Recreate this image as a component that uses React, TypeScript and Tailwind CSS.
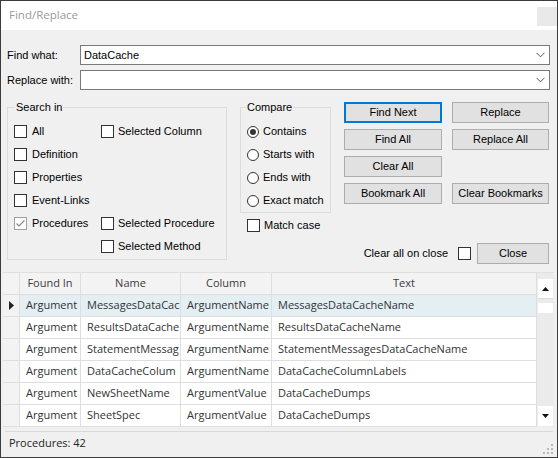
import React from "react";

function Check({ checked = false }: { checked?: boolean }) {
  return (
    <span
      className={
        checked
          ? "w-[13px] h-[13px] border border-[#a0a0a0] bg-white flex items-center justify-center shrink-0"
          : "w-[13px] h-[13px] border border-[#333333] bg-white flex items-center justify-center shrink-0"
      }
    >
      {checked && (
        <svg width="11" height="11" viewBox="0 0 11 11">
          <polyline points="1.5,5.5 4,8 9.5,2.5" fill="none" stroke="#8a8a8a" strokeWidth="1.2" />
        </svg>
      )}
    </span>
  );
}

function Radio({ checked = false }: { checked?: boolean }) {
  return (
    <span className="w-[12px] h-[12px] rounded-full border border-[#333333] bg-white flex items-center justify-center shrink-0">
      {checked && <span className="w-[6px] h-[6px] rounded-full bg-[#333333]" />}
    </span>
  );
}

function Combo({ value }: { value: string }) {
  return (
    <div className="w-[470px] h-[20px] border border-[#7a7a7a] bg-white flex items-center justify-between pl-[3px] pr-[4px]">
      <span className="leading-[14px]">{value}</span>
      <svg width="9" height="6" viewBox="0 0 9 6">
        <polyline points="0.5,0.8 4.5,4.8 8.5,0.8" fill="none" stroke="#555" strokeWidth="1" />
      </svg>
    </div>
  );
}

function Btn({ label, focused = false }: { label: string; focused?: boolean }) {
  return (
    <div
      className={
        focused
          ? "h-[21px] border-2 border-[#0078d7] bg-[#e1e1e1] flex items-center justify-center"
          : "h-[21px] border border-[#adadad] bg-[#e1e1e1] flex items-center justify-center"
      }
    >
      {label}
    </div>
  );
}

const rows: [string, string, string, string][] = [
  ["Argument", "MessagesDataCac", "ArgumentName", "MessagesDataCacheName"],
  ["Argument", "ResultsDataCache", "ArgumentName", "ResultsDataCacheName"],
  ["Argument", "StatementMessag", "ArgumentName", "StatementMessagesDataCacheName"],
  ["Argument", "DataCacheColum", "ArgumentName", "DataCacheColumnLabels"],
  ["Argument", "NewSheetName", "ArgumentValue", "DataCacheDumps"],
  ["Argument", "SheetSpec", "ArgumentValue", "DataCacheDumps"],
];

export default function App() {
  return (
    <div className="w-[558px] h-[458px] border border-[#3c3c3c] bg-[#f0f0f0] flex flex-col overflow-hidden font-['Liberation_Sans',Arial,sans-serif] text-[11px] text-black">
      {/* title bar */}
      <div className="h-[29px] bg-white flex justify-between items-start shrink-0">
        <span className="ml-[8px] mt-[6px] text-[#9a9a9a] font-['Open_Sans',sans-serif] text-[11.5px] leading-[16px]">
          Find/Replace
        </span>
        <div className="mt-[6px] w-[20px] h-[19px] bg-[#e9e9e9]" />
      </div>

      {/* find / replace rows */}
      <div className="mt-[15px] flex items-center h-[20px] pl-[6px] shrink-0">
        <span className="w-[73px]">Find what:</span>
        <Combo value="DataCache" />
      </div>
      <div className="mt-[5px] flex items-center h-[20px] pl-[6px] shrink-0">
        <span className="w-[73px]">Replace with:</span>
        <Combo value="" />
      </div>

      {/* middle */}
      <div className="h-[182px] flex pl-[6px] shrink-0">
        <fieldset className="mt-[11px] w-[220px] h-[159px] border border-[#dcdcdc]">
          <legend className="ml-[7px] px-[1px] leading-[13px]">Search in</legend>
          <div className="pt-[6px] pl-[6px] grid grid-cols-[87px_1fr]">
            {[
              ["All", "Selected Column", false],
              ["Definition", "", false],
              ["Properties", "", false],
              ["Event-Links", "", false],
              ["Procedures", "Selected Procedure", true],
              ["", "Selected Method", false],
            ].map(([a, b, c], i) => (
              <React.Fragment key={i}>
                <div className="h-[23px] flex items-center gap-[5px]">
                  {a !== "" && (
                    <>
                      <Check checked={c as boolean} />
                      <span>{a as string}</span>
                    </>
                  )}
                </div>
                <div className="h-[23px] flex items-center gap-[4px]">
                  {b !== "" && (
                    <>
                      <Check />
                      <span>{b as string}</span>
                    </>
                  )}
                </div>
              </React.Fragment>
            ))}
          </div>
        </fieldset>

        <div className="ml-[13px] w-[91px] flex flex-col">
          <fieldset className="mt-[11px] w-[91px] h-[112px] border border-[#dcdcdc]">
            <legend className="ml-[5px] px-[1px] leading-[13px]">Compare</legend>
            <div className="pt-[6px] pl-[6px] flex flex-col">
              {[
                ["Contains", true],
                ["Starts with", false],
                ["Ends with", false],
                ["Exact match", false],
              ].map(([l, c], i) => (
                <div key={i} className="h-[23px] flex items-center gap-[4px]">
                  <Radio checked={c as boolean} />
                  <span>{l as string}</span>
                </div>
              ))}
            </div>
          </fieldset>
          <div className="mt-[2px] h-[20px] flex items-center pl-[7px] gap-[4px]">
            <Check />
            <span>Match case</span>
          </div>
        </div>

        <div className="ml-[13px] mt-[12px] w-[205px] flex flex-col">
          <div className="grid grid-cols-[98px_97px] gap-x-[10px] gap-y-[6px]">
            <Btn label="Find Next" focused />
            <Btn label="Replace" />
            <Btn label="Find All" />
            <Btn label="Replace All" />
            <Btn label="Clear All" />
            <div />
            <Btn label="Bookmark All" />
            <Btn label="Clear Bookmarks" />
          </div>
          <div className="mt-[39px] h-[21px] flex items-center justify-end">
            <span>Clear all on close</span>
            <span className="ml-[10px]">
              <Check />
            </span>
            <div className="ml-[6px] w-[72px]">
              <Btn label="Close" />
            </div>
          </div>
        </div>
      </div>

      {/* grid */}
      <div className="ml-[2px] w-[551px] h-[155px] flex shrink-0 border-t border-[#e0e0e0] font-['Open_Sans',sans-serif] text-[11px] text-[#333333]">
        <div className="w-[534px] grid grid-cols-[17px_61px_100px_91px_265px] grid-rows-[22px_repeat(6,22px)] bg-white">
          <div className="bg-[#f3f3f3] border-r border-b border-[#dedede]" />
          {["Found In", "Name", "Column", "Text"].map((h) => (
            <div
              key={h}
              className="bg-[#f3f3f3] border-r border-b border-[#dedede] flex items-center justify-center text-[#3b3b3b]"
            >
              {h}
            </div>
          ))}
          {rows.map((r, i) => (
            <React.Fragment key={i}>
              <div className="bg-[#f3f3f3] border-r border-b border-[#dedede] flex items-center justify-center">
                {i === 0 && (
                  <svg width="5" height="9" viewBox="0 0 5 9">
                    <polygon points="0,0 5,4.5 0,9" fill="#222" />
                  </svg>
                )}
              </div>
              {r.map((c, j) => (
                <div
                  key={j}
                  className={
                    i === 0
                      ? "bg-[#e4eff3] border-r border-b border-[#dedede] flex items-center pl-[6px] overflow-hidden whitespace-nowrap"
                      : "bg-white border-r border-b border-[#dedede] flex items-center pl-[6px] overflow-hidden whitespace-nowrap"
                  }
                >
                  {c}
                </div>
              ))}
            </React.Fragment>
          ))}
        </div>
        <div className="w-[17px] bg-[#ebebeb] flex flex-col items-center">
          <div className="mt-[6px] w-[15px] h-[20px] bg-white border-b border-[#dcdcdc] flex items-center justify-center">
            <svg width="7" height="4" viewBox="0 0 7 4">
              <polygon points="0,4 3.5,0 7,4" fill="#111" />
            </svg>
          </div>
          <div className="mt-[4px] w-[15px] h-[10px] bg-white" />
          <div className="flex-1" />
          <div className="mb-[1px] w-[15px] h-[20px] bg-white flex items-center justify-center">
            <svg width="7" height="4" viewBox="0 0 7 4">
              <polygon points="0,0 3.5,4 7,0" fill="#111" />
            </svg>
          </div>
        </div>
      </div>

      {/* status */}
      <div className="flex-1 flex flex-col">
        <div className="mt-[4px] mx-[4px] h-px bg-[#d9d9d9]" />
        <div className="flex-1 flex justify-between">
          <span className="ml-[8px] mt-[3px] leading-[16px] font-['Open_Sans',sans-serif] text-[11px] text-[#222]">
            Procedures: 42
          </span>
          <svg className="self-end mr-[3px] mb-[2px]" width="12" height="12" viewBox="0 0 12 12">
            <rect x="9" y="1" width="2" height="2" fill="#b8b8b8" />
            <rect x="5" y="5" width="2" height="2" fill="#b8b8b8" />
            <rect x="9" y="5" width="2" height="2" fill="#b8b8b8" />
            <rect x="1" y="9" width="2" height="2" fill="#b8b8b8" />
            <rect x="5" y="9" width="2" height="2" fill="#b8b8b8" />
            <rect x="9" y="9" width="2" height="2" fill="#b8b8b8" />
          </svg>
        </div>
      </div>
    </div>
  );
}
